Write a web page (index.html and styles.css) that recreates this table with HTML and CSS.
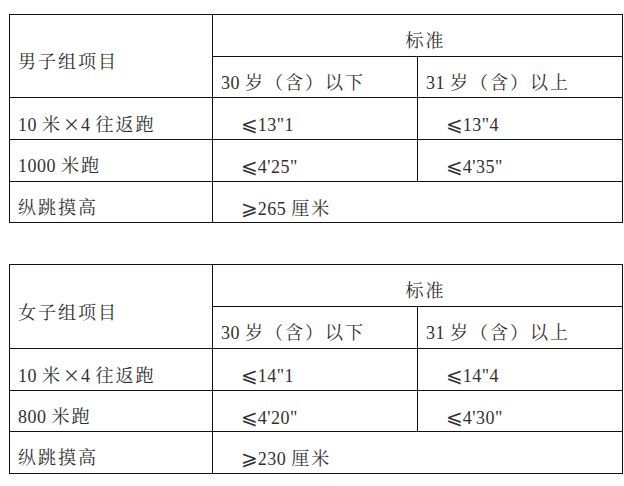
FILE: index.html
```html
<!DOCTYPE html>
<html lang="zh-CN">
<head>
<meta charset="utf-8">
<title>标准</title>
<link rel="stylesheet" href="styles.css">
</head>
<body>
<div class="page">
  <table class="std">
    <colgroup><col class="c1"><col class="c2"><col class="c3"></colgroup>
    <tr>
      <td class="label head" rowspan="2"><span class="c">男子组项目</span></td>
      <td class="title" colspan="2"><span class="c">标准</span></td>
    </tr>
    <tr>
      <td class="sub">30 <span class="c">岁（含）以下</span></td>
      <td class="sub">31 <span class="c">岁（含）以上</span></td>
    </tr>
    <tr>
      <td class="label">10 <span class="c">米</span><span class="x">×</span>4 <span class="c">往返跑</span></td>
      <td class="val"><span class="op">⩽</span>13"1</td>
      <td class="val"><span class="op">⩽</span>13"4</td>
    </tr>
    <tr>
      <td class="label">1000 <span class="c">米跑</span></td>
      <td class="val"><span class="op">⩽</span>4'25"</td>
      <td class="val"><span class="op">⩽</span>4'35"</td>
    </tr>
    <tr>
      <td class="label"><span class="c">纵跳摸高</span></td>
      <td class="val" colspan="2"><span class="op">⩾</span>265 <span class="c">厘米</span></td>
    </tr>
  </table>

  <table class="std">
    <colgroup><col class="c1"><col class="c2"><col class="c3"></colgroup>
    <tr>
      <td class="label head" rowspan="2"><span class="c">女子组项目</span></td>
      <td class="title" colspan="2"><span class="c">标准</span></td>
    </tr>
    <tr>
      <td class="sub">30 <span class="c">岁（含）以下</span></td>
      <td class="sub">31 <span class="c">岁（含）以上</span></td>
    </tr>
    <tr>
      <td class="label">10 <span class="c">米</span><span class="x">×</span>4 <span class="c">往返跑</span></td>
      <td class="val"><span class="op">⩽</span>14"1</td>
      <td class="val"><span class="op">⩽</span>14"4</td>
    </tr>
    <tr>
      <td class="label">800 <span class="c">米跑</span></td>
      <td class="val"><span class="op">⩽</span>4'20"</td>
      <td class="val"><span class="op">⩽</span>4'30"</td>
    </tr>
    <tr>
      <td class="label"><span class="c">纵跳摸高</span></td>
      <td class="val" colspan="2"><span class="op">⩾</span>230 <span class="c">厘米</span></td>
    </tr>
  </table>
</div>
</body>
</html>
```

FILE: styles.css
```css
html, body {
  margin: 0;
  padding: 0;
  background: #ffffff;
}

.page {
  padding: 14px 0 0 9px;
  display: flex;
  flex-direction: column;
  gap: 41px;
}

.std {
  border-collapse: collapse;
  table-layout: fixed;
  width: 613px;
  font-family: "Liberation Serif", "Noto Serif CJK SC", "Noto Sans CJK SC", serif;
  font-size: 18px;
  color: #303030;
  letter-spacing: 0.5px;
}

.std col.c1 { width: 203px; }
.std col.c2 { width: 205px; }
.std col.c3 { width: 205px; }

.std tr {
  height: 41.7px;
}

.std td {
  border: 1px solid #111111;
  padding: 14px 0 0 0;
  line-height: 24px;
  white-space: nowrap;
  vertical-align: top;
  overflow: hidden;
}

.std .c {
  letter-spacing: 2px;
}

.std .x {
  font-family: "Noto Sans CJK SC", sans-serif;
  font-size: 17px;
  letter-spacing: 0;
  margin: 0 1px;
}

.std .op {
  font-family: "DejaVu Serif", "DejaVu Sans", serif;
  font-size: 20px;
  letter-spacing: 0;
}

.std td.label {
  padding-left: 8px;
}

.std td.head {
  vertical-align: middle;
  padding-top: 12px;
}

.std td.title {
  text-align: center;
  padding-left: 16px;
}

.std td.sub {
  padding-left: 8px;
}

.std td.val {
  padding-left: 28px;
}
```
